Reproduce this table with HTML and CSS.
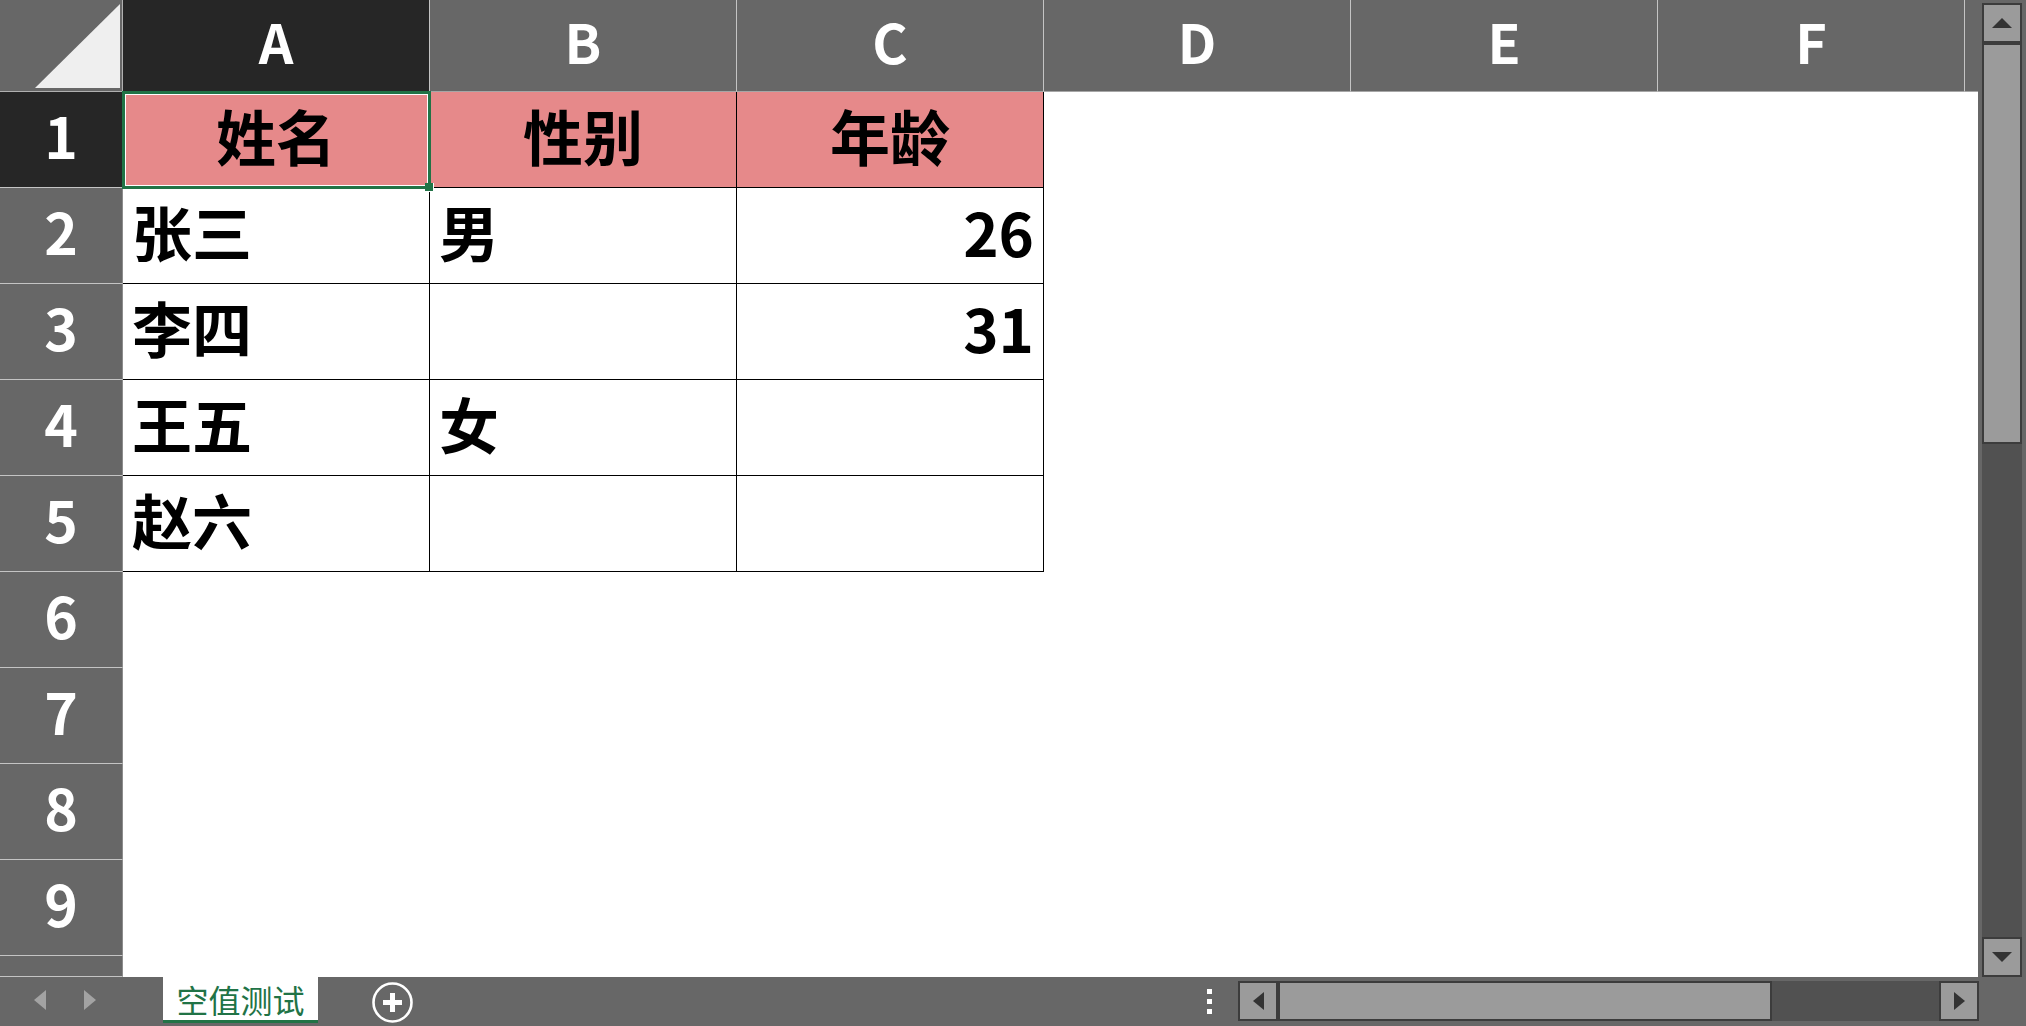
FILE: index.html
```html
<!DOCTYPE html>
<html lang="zh-CN">
<head>
<meta charset="utf-8">
<title>空值测试</title>
<link rel="stylesheet" href="styles.css">
</head>
<body>
<div class="app">
  <div class="main">
    <div class="sheet">
      <div class="corner"><svg width="85" height="84" viewBox="0 0 85 84"><polygon points="0,84 85,84 85,0" fill="#efefef"/></svg></div>
      <div class="ch sel-h">A</div>
      <div class="ch">B</div>
      <div class="ch">C</div>
      <div class="ch">D</div>
      <div class="ch">E</div>
      <div class="ch">F</div>
      <div class="ch last"></div>

      <div class="rh sel-h">1</div>
      <div class="c t hd sel">姓名</div>
      <div class="c t hd">性别</div>
      <div class="c t hd">年龄</div>
      <div class="c"></div><div class="c"></div><div class="c"></div><div class="c"></div>

      <div class="rh">2</div>
      <div class="c t">张三</div>
      <div class="c t">男</div>
      <div class="c t num">26</div>
      <div class="c"></div><div class="c"></div><div class="c"></div><div class="c"></div>

      <div class="rh">3</div>
      <div class="c t">李四</div>
      <div class="c t"></div>
      <div class="c t num">31</div>
      <div class="c"></div><div class="c"></div><div class="c"></div><div class="c"></div>

      <div class="rh">4</div>
      <div class="c t">王五</div>
      <div class="c t">女</div>
      <div class="c t num"></div>
      <div class="c"></div><div class="c"></div><div class="c"></div><div class="c"></div>

      <div class="rh">5</div>
      <div class="c t">赵六</div>
      <div class="c t"></div>
      <div class="c t num"></div>
      <div class="c"></div><div class="c"></div><div class="c"></div><div class="c"></div>

      <div class="rh">6</div>
      <div class="c"></div><div class="c"></div><div class="c"></div><div class="c"></div><div class="c"></div><div class="c"></div><div class="c"></div>
      <div class="rh">7</div>
      <div class="c"></div><div class="c"></div><div class="c"></div><div class="c"></div><div class="c"></div><div class="c"></div><div class="c"></div>
      <div class="rh">8</div>
      <div class="c"></div><div class="c"></div><div class="c"></div><div class="c"></div><div class="c"></div><div class="c"></div><div class="c"></div>
      <div class="rh">9</div>
      <div class="c"></div><div class="c"></div><div class="c"></div><div class="c"></div><div class="c"></div><div class="c"></div><div class="c"></div>
      <div class="rh"></div>
      <div class="c"></div><div class="c"></div><div class="c"></div><div class="c"></div><div class="c"></div><div class="c"></div><div class="c"></div>
    </div>
    <div class="vscroll">
      <div class="sb"><svg width="20" height="10" viewBox="0 0 20 10"><polygon points="0,10 10,0 20,10" fill="#333"/></svg></div>
      <div class="vthumb"></div>
      <div class="track"></div>
      <div class="sb"><svg width="20" height="10" viewBox="0 0 20 10"><polygon points="0,0 20,0 10,10" fill="#333"/></svg></div>
    </div>
  </div>
  <div class="bar">
    <div class="nav">
      <svg width="12" height="20" viewBox="0 0 12 20"><polygon points="12,0 0,10 12,20" fill="#a3a3a3"/></svg>
      <svg width="12" height="20" viewBox="0 0 12 20"><polygon points="0,0 12,10 0,20" fill="#a3a3a3"/></svg>
    </div>
    <div class="tab">空值测试</div>
    <div class="plus"><svg width="41" height="41" viewBox="0 0 41 41"><circle cx="20.5" cy="20.5" r="19" fill="none" stroke="#fff" stroke-width="2.6"/><rect x="18" y="11" width="5" height="19" fill="#fff"/><rect x="11" y="18" width="19" height="5" fill="#fff"/></svg></div>
    <div class="spacer"></div>
    <div class="dots"><svg width="6" height="25" viewBox="0 0 6 25"><rect x="0" y="0" width="5" height="5" fill="#fff"/><rect x="0" y="10" width="5" height="5" fill="#fff"/><rect x="0" y="20" width="5" height="5" fill="#fff"/></svg></div>
    <div class="hscroll">
      <div class="sb"><svg width="11" height="18" viewBox="0 0 11 18"><polygon points="11,0 0,9 11,18" fill="#333"/></svg></div>
      <div class="hthumb"></div>
      <div class="track"></div>
      <div class="sb"><svg width="11" height="18" viewBox="0 0 11 18"><polygon points="0,0 11,9 0,18" fill="#333"/></svg></div>
    </div>
  </div>
</div>
</body>
</html>
```

FILE: styles.css
```css
html, body {
  margin: 0;
  padding: 0;
}
body {
  background: #676767;
  font-family: "Noto Sans CJK SC", "Noto Sans", sans-serif;
  overflow: hidden;
}
.app {
  width: 2026px;
  height: 1026px;
  display: flex;
  flex-direction: column;
}
.main {
  display: flex;
  height: 977px;
}
.sheet {
  width: 1978px;
  height: 977px;
  display: grid;
  grid-template-columns: 123px repeat(6, 307px) 13px;
  grid-template-rows: 92px repeat(9, 96px) 21px;
  background: #fff;
}
.corner {
  background: #676767;
  border-bottom: 1px solid #b0b0b0;
  border-right: 1px solid #b0b0b0;
  box-sizing: border-box;
  display: flex;
  align-items: flex-end;
  justify-content: flex-end;
  padding: 0 2px 3px 0;
}
.corner svg { display: block; }
.ch {
  background: #676767;
  color: #fff;
  font-weight: 700;
  font-size: 54px;
  line-height: 1;
  display: flex;
  align-items: center;
  justify-content: center;
  padding-bottom: 10px;
  border-right: 1px solid #c4c4c4;
  border-bottom: 1px solid #a6a6a6;
  box-sizing: border-box;
}
.ch.last { border-right: 0; }
.rh {
  background: #676767;
  color: #fff;
  font-weight: 700;
  font-size: 57px;
  line-height: 1;
  display: flex;
  align-items: center;
  justify-content: center;
  padding-bottom: 10px;
  border-bottom: 1px solid #c4c4c4;
  border-right: 1px solid #8c8c8c;
  box-sizing: border-box;
}
.sel-h { background: #262626; }
.c {
  box-sizing: border-box;
  font-size: 60px;
  font-weight: 700;
  line-height: 1;
  color: #000;
  display: flex;
  align-items: center;
  padding: 0 9px 10px 9px;
}
.t {
  border-right: 1px solid #000;
  border-bottom: 1px solid #000;
}
.hd {
  background: #e6898a;
  justify-content: center;
}
.num { justify-content: flex-end; }
.sel { position: relative; }
.sel::after {
  content: "";
  position: absolute;
  left: -1px;
  top: -1px;
  right: -2px;
  bottom: -2px;
  border: 3px solid #217346;
  box-shadow: inset 0 0 0 1px #fff;
  z-index: 2;
}
.sel::before {
  content: "";
  position: absolute;
  right: -5px;
  bottom: -5px;
  width: 8px;
  height: 8px;
  background: #217346;
  border: 1px solid #fff;
  border-width: 0 1px 1px 0;
  z-index: 3;
}

.vscroll {
  width: 40px;
  height: 974px;
  margin: 3px 4px 0 4px;
  display: flex;
  flex-direction: column;
  background: #515151;
}
.sb {
  width: 40px;
  height: 40px;
  flex: none;
  box-sizing: border-box;
  background: #9b9b9b;
  border: 2px solid #3c3c3c;
  display: flex;
  align-items: center;
  justify-content: center;
}
.sb svg { display: block; }
.vthumb {
  height: 401px;
  flex: none;
  box-sizing: border-box;
  background: #9b9b9b;
  border: 2px solid #3c3c3c;
}
.track { flex: 1; background: #515151; }

.bar {
  height: 49px;
  display: flex;
  align-items: flex-start;
  background: #676767;
}
.nav {
  width: 163px;
  height: 49px;
  box-sizing: border-box;
  padding: 0 0 4px 34px;
  display: flex;
  align-items: center;
  gap: 38px;
}
.nav svg { display: block; }
.tab {
  width: 155px;
  height: 46px;
  box-sizing: border-box;
  background: #fff;
  border-bottom: 3px solid #217346;
  color: #217346;
  font-size: 32px;
  line-height: 1;
  display: flex;
  align-items: center;
  justify-content: center;
}
.plus {
  margin: 5px 0 0 54px;
  width: 41px;
  height: 41px;
}
.plus svg { display: block; }
.spacer { flex: 1; }
.dots {
  margin: 12px 25px 0 0;
  width: 6px;
}
.dots svg { display: block; }
.hscroll {
  width: 741px;
  height: 40px;
  margin: 4px 47px 0 0;
  display: flex;
  background: #515151;
}
.hthumb {
  width: 494px;
  flex: none;
  box-sizing: border-box;
  background: #9b9b9b;
  border: 2px solid #3c3c3c;
}
```
